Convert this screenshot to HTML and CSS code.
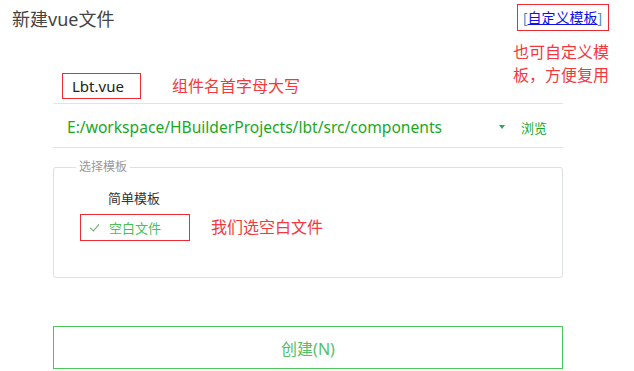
FILE: index.html
```html
<!DOCTYPE html>
<html lang="zh-CN">
<head>
    <meta charset="UTF-8">
    <title>新建vue文件</title>
    <link rel="stylesheet" href="styles.css">
</head>
<body>
    <div class="dialog">
        <div class="header">
            <h1 class="title">新建vue文件</h1>
            <span class="custom-link mark">[<a href="#">自定义模板</a>]</span>
        </div>
        <div class="note note-top">也可自定义模<br>板，方便复用</div>
        <span class="corner"></span>

        <div class="form">
            <div class="row name-row">
                <span class="name-box mark">Lbt.vue</span>
                <span class="note">组件名首字母大写</span>
            </div>
            <div class="row path-row">
                <span class="path">E:/workspace/HBuilderProjects/lbt/src/components</span>
                <span class="caret"></span>
                <span class="browse">浏览</span>
            </div>

            <fieldset class="templates">
                <legend>选择模板</legend>
                <div class="tpl">简单模板</div>
                <div class="tpl-row">
                    <div class="tpl tpl-selected mark">
                        <span class="check"></span>空白文件
                    </div>
                    <span class="note">我们选空白文件</span>
                </div>
            </fieldset>

            <button class="create-btn">创建(N)</button>
        </div>
    </div>
</body>
</html>
```

FILE: styles.css
```css
body {
    margin: 0;
    font-family: "Noto Sans", "Noto Sans CJK SC", sans-serif;
    background-color: #fff;
    color: #333;
}

.dialog {
    position: relative;
    width: 634px;
    height: 371px;
}

.header {
    display: flex;
    justify-content: space-between;
    align-items: flex-start;
    height: 66px;
    box-sizing: border-box;
    padding: 8px 25px 0 12px;
}

.title {
    margin: 0;
    font-size: 18px;
    font-weight: normal;
    line-height: 22px;
    color: #444;
}

.mark {
    border: 1px solid #ea2b31; /* red annotation box */
    box-sizing: border-box;
}

.custom-link {
    width: 92px;
    height: 27px;
    margin-top: -4px;
    padding: 4px 0 0 5px;
    font-size: 14px;
    line-height: 18px;
    color: #4a8fc7;
    white-space: nowrap;
}

.custom-link a {
    color: #1010e8;
}

.note {
    font-size: 16px;
    line-height: 23px;
    color: #f2393e;
}

.note-top {
    position: absolute;
    left: 513px;
    top: 41px;
}

.corner {
    position: absolute;
    right: 3px;
    top: -6px;
    width: 10px;
    height: 10px;
    border-left: 1px solid #ccc;
    border-top: 1px solid #ccc;
    transform: rotate(45deg);
}

.form {
    margin-left: 53px;
    width: 510px;
}

.row {
    display: flex;
    align-items: center;
    border-bottom: 1px solid #e3e3e3;
}

.name-row {
    padding: 7px 0 4px 9px;
}

.name-box {
    width: 79px;
    height: 26px;
    padding-left: 9px;
    font-size: 15px;
    line-height: 24px;
    color: #222;
}

.name-row .note {
    margin-left: 31px;
}

.path-row {
    height: 44px;
    box-sizing: border-box;
    padding: 3px 16px 0 14px;
    color: #19a81f;
}

.path {
    flex: 1;
    font-size: 15.6px;
}

.caret {
    width: 0;
    height: 0;
    border-left: 3px solid transparent;
    border-right: 3px solid transparent;
    border-top: 4px solid #35a356;
    margin-right: 16px;
}

.browse {
    font-size: 13px;
}

.templates {
    margin: 12px 0 0;
    padding: 14px 0 36px 26px;
    border: 1px solid #dce1e7;
    border-radius: 3px;
}

.templates legend {
    margin-left: -4px;
    padding: 0 3px;
    font-size: 12px;
    line-height: 14px;
    color: #999;
}

.tpl {
    padding-left: 28px;
    font-size: 13px;
    line-height: 20px;
    color: #333;
}

.tpl-row {
    display: flex;
    align-items: center;
    margin-top: 6px;
}

.tpl-selected {
    display: flex;
    align-items: center;
    width: 110px;
    height: 27px;
    padding-left: 9px;
    color: #47c257;
}

.check {
    width: 4px;
    height: 8px;
    margin: -3px 12px 0 2px;
    border-right: 1.5px solid #5cae6a;
    border-bottom: 1.5px solid #5cae6a;
    transform: rotate(40deg);
}

.tpl-row .note {
    margin-left: 21px;
}

.create-btn {
    display: block;
    width: 510px;
    height: 43px;
    margin-top: 48px;
    background-color: #fff;
    border: 1px solid #4fc35b;
    font-family: "Noto Sans", "Noto Sans CJK SC", sans-serif;
    font-size: 16px;
    color: #55bf63;
    cursor: pointer;
}
```
